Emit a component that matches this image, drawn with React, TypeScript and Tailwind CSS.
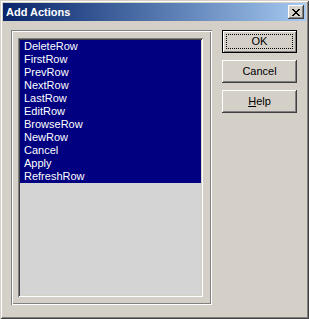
import React from "react";

const actions = [
  "DeleteRow",
  "FirstRow",
  "PrevRow",
  "NextRow",
  "LastRow",
  "EditRow",
  "BrowseRow",
  "NewRow",
  "Cancel",
  "Apply",
  "RefreshRow",
];

// classic 8x7 close glyph
const closeGlyph = [
  "XX....XX",
  ".XX..XX.",
  "..XXXX..",
  "...XX...",
  "..XXXX..",
  ".XX..XX.",
  "XX....XX",
];

function CloseButton() {
  return (
    <div className="w-[16px] h-[14px] bg-[#d4d0c8] flex items-center justify-center shadow-[inset_-1px_-1px_0_#404040,inset_1px_1px_0_#fff,inset_-2px_-2px_0_#808080,inset_2px_2px_0_#d4d0c8]">
      <svg width="8" height="7" viewBox="0 0 8 7" shapeRendering="crispEdges">
        {closeGlyph.map((row, y) =>
          row.split("").map((c, x) =>
            c === "X" ? <rect key={`${x}-${y}`} x={x} y={y} width="1" height="1" fill="#000" /> : null
          )
        )}
      </svg>
    </div>
  );
}

function Button({ children, isDefault = false }: { children: React.ReactNode; isDefault?: boolean }) {
  if (isDefault) {
    return (
      <div className="w-[75px] h-[23px] border border-black bg-[#d4d0c8] p-[3px] flex shadow-[inset_1px_1px_0_#fff,inset_-1px_-1px_0_#808080]">
        <span className="flex-1 flex items-center justify-center border border-dotted border-black">{children}</span>
      </div>
    );
  }
  return (
    <div className="w-[75px] h-[23px] bg-[#d4d0c8] flex items-center justify-center shadow-[inset_-1px_-1px_0_#404040,inset_1px_1px_0_#fff,inset_-2px_-2px_0_#808080,inset_2px_2px_0_#d4d0c8]">
      {children}
    </div>
  );
}

export default function App() {
  return (
    <div
      className="w-[309px] h-[319px] bg-[#d4d0c8] p-[3px] flex flex-col text-[11px] text-black shadow-[inset_1px_1px_0_#d4d0c8,inset_-1px_-1px_0_#404040,inset_2px_2px_0_#fff,inset_-2px_-2px_0_#808080]"
      style={{ fontFamily: '"Liberation Sans", Arial, sans-serif' }}
    >
      {/* title bar */}
      <div className="h-[18px] flex items-center bg-linear-to-r from-[#0a246a] to-[#a6caf0] pl-[3px] pr-[2px]">
        <span className="flex-1 text-white font-bold text-[11px] leading-[18px]">Add Actions</span>
        <CloseButton />
      </div>

      <div className="flex pl-[8px] pt-[9px]">
        {/* group box */}
        <div className="w-[201px] h-[275px] pl-[7px] pt-[8px] shadow-[inset_1px_1px_0_#808080,inset_2px_2px_0_#fff,inset_-1px_-1px_0_#fff,inset_-2px_-2px_0_#808080]">
          <div className="w-[185px] h-[259px] p-[2px] bg-[#d4d4d4] shadow-[inset_1px_1px_0_#808080,inset_-1px_-1px_0_#fff,inset_2px_2px_0_#404040,inset_-2px_-2px_0_#d4d0c8]">
            <div className="bg-[#000080] text-white">
              {actions.map((a) => (
                <div key={a} className="h-[13px] leading-[13px] pl-[4px]">
                  {a}
                </div>
              ))}
            </div>
          </div>
        </div>

        {/* buttons */}
        <div className="ml-[10px] flex flex-col gap-[7px]">
          <Button isDefault>OK</Button>
          <Button>Cancel</Button>
          <Button>
            <span>
              <span className="underline">H</span>elp
            </span>
          </Button>
        </div>
      </div>
    </div>
  );
}
